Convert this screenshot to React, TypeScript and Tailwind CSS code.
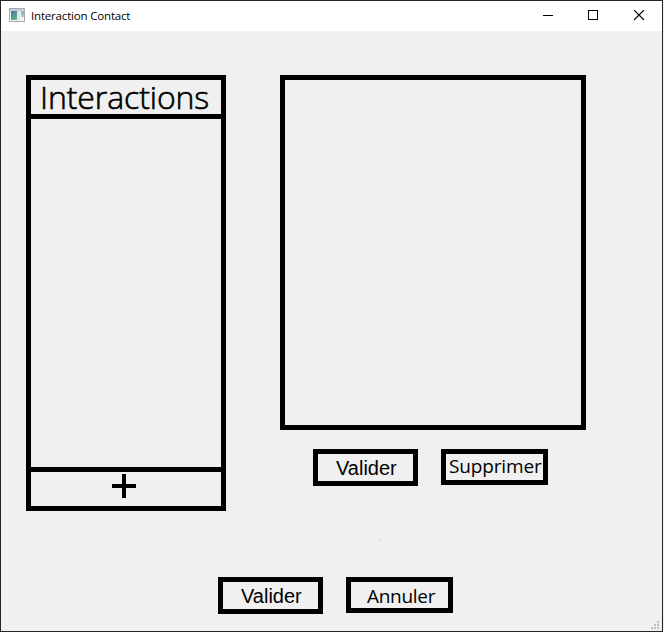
import type { ReactNode } from 'react';

function AppIcon() {
  return (
    <svg width="16" height="14" viewBox="0 0 16 14" shapeRendering="crispEdges">
      <defs>
        <linearGradient id="pane" x1="0" y1="0" x2="0.6" y2="1">
          <stop offset="0" stopColor="#3f78a8" />
          <stop offset="1" stopColor="#5cb585" />
        </linearGradient>
      </defs>
      <rect x="0.5" y="0.5" width="15" height="13" fill="#f2f2f2" stroke="#a3a9ae" />
      <rect x="1" y="1" width="14" height="2" fill="#c5ccd2" />
      <rect x="2" y="3" width="6" height="9" fill="url(#pane)" />
      <rect x="8" y="3" width="3" height="9" fill="#e2e5e8" />
      <rect x="12" y="3" width="3" height="4" fill="#8db8d0" />
      <rect x="12" y="7" width="3" height="2" fill="#a9d3bd" />
    </svg>
  );
}

function TitleBar() {
  return (
    <div className="flex h-[30px] shrink-0 items-start bg-white text-black">
      <div className="pl-2 pt-[7px]">
        <AppIcon />
      </div>
      <h1 className="ml-[6px] mt-[6px] whitespace-nowrap font-['Open_Sans','Noto_Sans',sans-serif] text-[11.5px] leading-[18px] tracking-[-0.18px]">
        Interaction Contact
      </h1>
      <div className="ml-auto flex pt-[9px] pr-[17px]">
        <svg width="102" height="11" viewBox="0 0 102 11" fill="none" stroke="black">
          <path d="M0 5.5H10" shapeRendering="crispEdges" />
          <path d="M45.5 .5H54.5V9.5H45.5Z" shapeRendering="crispEdges" />
          <path d="M91 0L101 10M101 0L91 10" strokeWidth="1.1" />
        </svg>
      </div>
    </div>
  );
}

function BoxButton({ className, children }: { className: string; children: ReactNode }) {
  return (
    <button className={`block whitespace-nowrap border-[5px] border-black text-left ${className}`}>
      {children}
    </button>
  );
}

export default function App() {
  return (
    <div className="h-[632px] w-[664px] bg-[#f0f0f0] pr-px">
      <div className="flex h-full w-full flex-col border border-[#252525] bg-[#f0f0f0] text-black">
        <TitleBar />
        <main className="flex flex-1 flex-col pt-11">
          <div className="flex h-[436px] pl-[25px]">
            <section className="flex w-[200px] flex-col border-[5px] border-black">
              <h2 className="h-[34px] whitespace-nowrap pl-[9px] font-['Open_Sans','Noto_Sans',sans-serif] text-[32px] font-light leading-[34px] tracking-[-0.1px] [-webkit-text-stroke:0.6px_black]">
                Interactions
              </h2>
              <div className="h-[358px] border-y-[5px] border-black" />
              <button className="flex h-[34px] justify-center pt-[2px] pr-[4px]">
                <svg width="24" height="24" viewBox="0 0 24 24" shapeRendering="crispEdges">
                  <path d="M10 0H14V10H24V14H14V24H10V14H0V10H10Z" />
                </svg>
              </button>
            </section>
            <section className="ml-[54px] flex w-[306px] flex-col">
              <div className="h-[355px] border-[5px] border-black" />
              <div className="mt-[19px] flex items-start pl-[33px]">
                <BoxButton className="h-[37px] w-[105px] pl-[18px] font-['Liberation_Sans',sans-serif] text-[20px] leading-[26px]">
                  Valider
                </BoxButton>
                <BoxButton className="ml-[23px] h-[36px] w-[107px] pb-[2px] pl-[3px] font-['Open_Sans','Noto_Sans',sans-serif] text-[19px] leading-[24px] tracking-[-0.15px]">
                  Supprimer
                </BoxButton>
              </div>
            </section>
          </div>
          <div className="flex h-[66px] items-start pl-[353px] pt-[18px]">
            <svg width="26" height="13" viewBox="0 0 26 13" shapeRendering="crispEdges">
              <rect x="0" y="0" width="1" height="1" fill="#d2d2d2" />
              <rect x="25" y="11" width="1" height="1" fill="#a0a0a0" />
            </svg>
          </div>
          <div className="flex items-start pl-[217px]">
            <BoxButton className="h-[37px] w-[105px] pl-[18px] font-['Liberation_Sans',sans-serif] text-[20px] leading-[26px]">
              Valider
            </BoxButton>
            <BoxButton className="ml-[23px] h-[36px] w-[107px] pl-[16px] pt-[2px] font-['Open_Sans','Noto_Sans',sans-serif] text-[19px] leading-[24px] tracking-[-0.3px]">
              Annuler
            </BoxButton>
          </div>
          <div className="mt-auto flex justify-end pb-[2px] pr-[3px]">
            <svg width="8" height="8" viewBox="0 0 8 8" fill="#bfbfbf" shapeRendering="crispEdges">
              <path d="M6 0h2v2h-2zM3 3h2v2h-2zM6 3h2v2h-2zM0 6h2v2h-2zM3 6h2v2h-2zM6 6h2v2h-2z" />
            </svg>
          </div>
        </main>
      </div>
    </div>
  );
}
